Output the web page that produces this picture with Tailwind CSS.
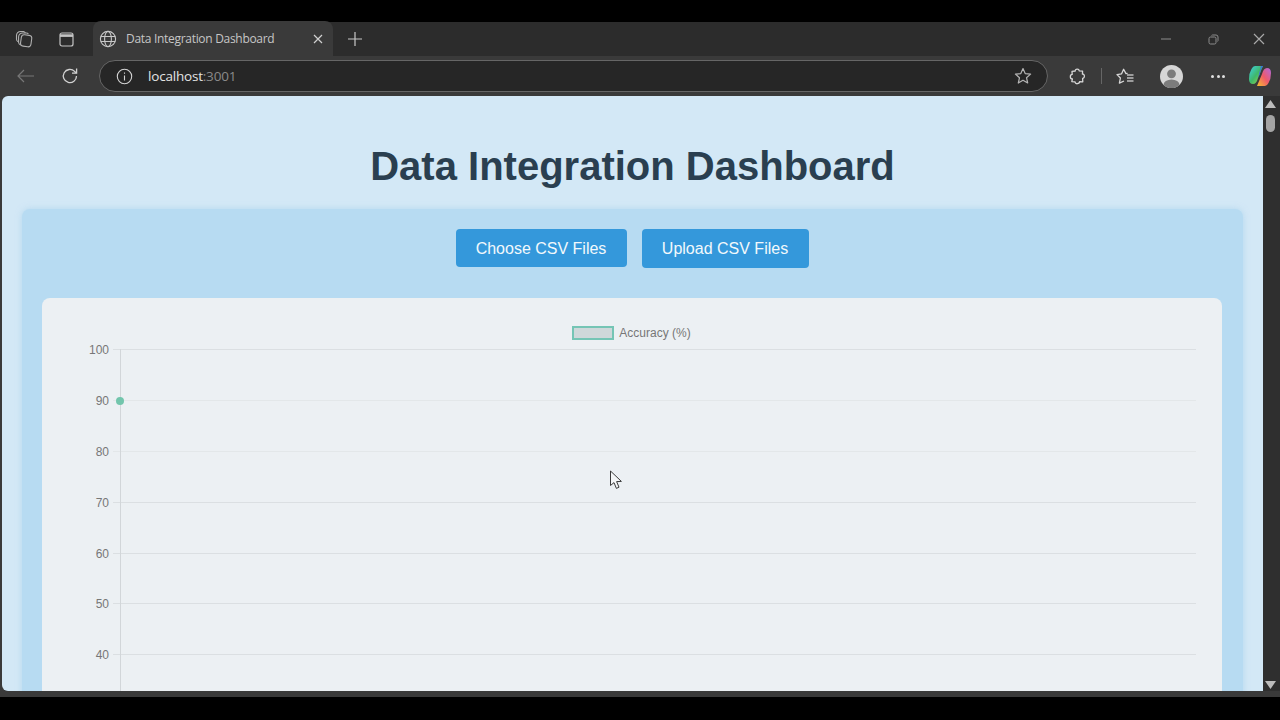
<!DOCTYPE html>
<html>
<head>
<meta charset="utf-8">
<script src="https://cdn.jsdelivr.net/npm/@tailwindcss/browser@4"></script>
<title>Data Integration Dashboard</title>
</head>
<body class="relative w-[1280px] h-[720px] overflow-hidden bg-black font-['Liberation_Sans',Arial,sans-serif]">
<div class="h-[22px] bg-black"></div>
<!-- tab bar -->
<div class="h-[34px] bg-[#2c2c2c] flex items-stretch text-[#c9c9c9]">
  <div class="w-[48px] flex items-center justify-center">
    <svg class="w-[18px] h-[18px]" viewBox="0 0 18 18" fill="none" stroke="#b0b0b0" stroke-width="1.1"><rect x="6" y="5" width="10.5" height="11.5" rx="3" transform="rotate(8 11 10)"/><path d="M5.6 15 A3 3 0 0 1 3.6 12.5 V7 A4 4 0 0 1 7.6 3 H11 A2.6 2.6 0 0 1 13.4 4"/><path d="M3.6 12 A3 3 0 0 1 1.5 9.2 V5.5 A4 4 0 0 1 5.5 1.5 H8.6 A2.6 2.6 0 0 1 10.4 3"/></svg>
  </div>
  <div class="w-[36px] flex items-center justify-center">
    <svg class="w-[15px] h-[15px]" viewBox="0 0 15 15" fill="none" stroke="#c4c4c4" stroke-width="1.2"><rect x="1" y="1" width="13" height="13" rx="2"/><path d="M1 3.6 H14" stroke-width="2.6"/></svg>
  </div>
  <div class="w-[240px] ml-[9px] bg-[#3a3a3a] rounded-t-lg flex items-center pl-[6px] pr-[10px] mt-[-1px] pt-[1px]">
    <svg class="w-[18px] h-[18px] shrink-0" viewBox="0 0 18 18" fill="none" stroke="#c8c8c8" stroke-width="1.1"><circle cx="9" cy="9" r="7.6"/><ellipse cx="9" cy="9" rx="3.4" ry="7.6"/><path d="M1.8 6.5 H16.2 M1.8 11.5 H16.2"/></svg>
    <span class="ml-[9px] text-[12px] text-[#c6c6c6] flex-1 font-['Open_Sans',sans-serif] tracking-[-0.3px] whitespace-nowrap">Data Integration Dashboard</span>
    <svg class="w-[10px] h-[10px]" viewBox="0 0 10 10" stroke="#d0d0d0" stroke-width="1.2"><path d="M1 1 L9 9 M9 1 L1 9"/></svg>
  </div>
  <div class="w-[44px] flex items-center justify-center">
    <svg class="w-[14px] h-[14px]" viewBox="0 0 14 14" stroke="#c8c8c8" stroke-width="1.2"><path d="M7 0 V14 M0 7 H14"/></svg>
  </div>
  <div class="flex-1"></div>
  <div class="w-[119px] shrink-0 flex items-center">
    <svg class="w-[10px] h-[10px] shrink-0" viewBox="0 0 10 10" stroke="#8c8c8c" stroke-width="1"><path d="M0 5 H10"/></svg>
    <svg class="w-[11px] h-[11px] ml-[36.5px] shrink-0" viewBox="0 0 11 11" fill="none" stroke="#8c8c8c" stroke-width="1"><rect x="1" y="3" width="7" height="7" rx="1.5"/><path d="M3.5 1.5 A1 1 0 0 1 4.5 1 H8 A2 2 0 0 1 10 3 V6.5 A1 1 0 0 1 9.5 7.5"/></svg>
    <svg class="w-[12px] h-[12px] ml-[34.5px] shrink-0" viewBox="0 0 12 12" stroke="#a8a8a8" stroke-width="1.2"><path d="M1 1 L11 11 M11 1 L1 11"/></svg>
  </div>
</div>
<!-- toolbar -->
<div class="h-[40px] bg-[#3a3a3a] flex items-center relative">
  <div class="w-[52px] flex justify-center">
    <svg class="w-[18px] h-[14px]" viewBox="0 0 18 14" fill="none" stroke="#777" stroke-width="1.2"><path d="M17 7 H1 M7 1 L1 7 L7 13"/></svg>
  </div>
  <div class="w-[36px] flex justify-center">
    <svg class="w-[18px] h-[18px]" viewBox="0 0 18 18" fill="none" stroke="#d2d2d2" stroke-width="1.3"><path d="M15.5 9 A6.6 6.6 0 1 1 13.6 4.4 L15.5 6"/><path d="M15.6 1.6 V6.2 H11"/></svg>
  </div>
  <div class="ml-[11px] w-[949px] h-[32px] rounded-full bg-[#262626] border border-[#666] flex items-center pl-[16px] pr-[15px]">
    <svg class="w-[17px] h-[17px]" viewBox="0 0 17 17" fill="none" stroke="#d4d4d4" stroke-width="1.1"><circle cx="8.5" cy="8.5" r="7.2"/><path d="M8.5 7.5 V12.5 M8.5 4.4 V5.8"/></svg>
    <span class="ml-[15px] text-[13.5px] font-['Open_Sans',sans-serif] tracking-[-0.2px] text-[#e4e4e4] flex-1">localhost<span class="text-[#8a8a8a]">:3001</span></span>
    <svg class="w-[18px] h-[18px]" viewBox="0 0 18 18" fill="none" stroke="#b4b4b4" stroke-width="1.2" stroke-linejoin="round"><path d="M9 1.6 L11.2 6.6 L16.6 7.1 L12.5 10.7 L13.7 16 L9 13.2 L4.3 16 L5.5 10.7 L1.4 7.1 L6.8 6.6 Z"/></svg>
  </div>
  <div class="ml-[19px] w-[20px] flex justify-center">
    <svg class="w-[17px] h-[17px]" viewBox="0 0 17 17" fill="none" stroke="#d6d6d6" stroke-width="1.3" stroke-linejoin="round"><path d="M6.2 3 C6 0.6 10 0.4 10.2 2.8 L13.6 3.2 L13.4 6 C16 5.8 16 10.4 13.6 10.4 L13.8 13.8 L10.6 13.6 C10.6 16.4 6 16.4 6 13.8 L2.8 13.6 L3.4 11 C0.6 10.8 0.8 6.4 3.2 6.4 L3 3.4 Z"/></svg>
  </div>
  <div class="ml-[14px] w-px h-[16px] bg-[#666]"></div>
  <div class="ml-[13px] w-[20px] flex justify-center">
    <svg class="w-[18px] h-[17px]" viewBox="0 0 18 17" fill="none" stroke="#d6d6d6" stroke-width="1.3" stroke-linejoin="round"><path d="M11.6 5.4 L10 5.6 L7.6 1.2 L5.6 5.8 L1 6.6 L4.4 10 L3.4 15.2 L8 13"/><path d="M11 7 H17.5 M11 10 H17.5 M11 13 H17.5" stroke="#bdbdbd"/></svg>
  </div>
  <div class="ml-[25px] w-[23px] h-[23px] rounded-full bg-[#d6d6d6] overflow-hidden flex justify-center">
    <svg class="w-[23px] h-[23px]" viewBox="0 0 23 23"><circle cx="11.5" cy="8.8" r="4.4" fill="#7c7c7c"/><ellipse cx="11.5" cy="20" rx="8" ry="5.5" fill="#7c7c7c"/></svg>
  </div>
  <div class="ml-[28px] w-[14px] flex justify-between">
    <span class="w-[3px] h-[3px] rounded-full bg-[#e0e0e0]"></span><span class="w-[3px] h-[3px] rounded-full bg-[#e0e0e0]"></span><span class="w-[3px] h-[3px] rounded-full bg-[#e0e0e0]"></span>
  </div>
  <div class="ml-[23px]">
    <svg class="w-[24px] h-[22px]" viewBox="0 0 24 22">
      <defs>
        <linearGradient id="cpa" x1="0" y1="0" x2="1" y2="1"><stop offset="0" stop-color="#3fd0e8"/><stop offset="0.5" stop-color="#3fb86a"/><stop offset="1" stop-color="#a8d848"/></linearGradient>
        <linearGradient id="cpb" x1="0" y1="1" x2="1" y2="0"><stop offset="0" stop-color="#f6c12d"/><stop offset="0.5" stop-color="#ef5a6a"/><stop offset="1" stop-color="#b06ae0"/></linearGradient>
      </defs>
      <path d="M7 1 H15 L10 13 Q8.5 19 5 19 Q1 19 1 14 Q1 8 3.5 4 Q5 1 7 1 Z" fill="url(#cpa)"/>
      <path d="M17 21 H9 L14 9 Q15.5 3 19 3 Q23 3 23 8 Q23 14 20.5 18 Q19 21 17 21 Z" fill="url(#cpb)"/>
      <path d="M13 1 H15 Q12.5 4 12 9 L10 13 Z" fill="#3b6fe0"/>
    </svg>
  </div>
</div>
<!-- viewport -->
<div class="h-[595px] bg-[#3a3a3a] flex pl-[2px]">
  <div class="w-[1261px] h-[595px] rounded-tl-md rounded-bl-md overflow-hidden bg-[#d3e8f6] px-[20px]">
    <h1 class="h-[113px] pt-[45px] text-center text-[#2a3f50] text-[40px] leading-[50px] font-bold">Data Integration Dashboard</h1>
    <div class="h-[600px] bg-[#b7dbf2] rounded-t-lg px-[20px] pt-[20px] shadow-[0_0_6px_rgba(160,205,235,0.6)]">
      <div class="flex justify-center gap-[15px] h-[39px] pr-[1px]">
        <div class="w-[171px] h-[38px] pt-[1px] rounded bg-[#3498db] text-[#f2f8fc] text-[16px] flex items-center justify-center">Choose CSV Files</div>
        <div class="w-[167px] h-[39px] rounded bg-[#3498db] text-[#f2f8fc] text-[16px] flex items-center justify-center">Upload CSV Files</div>
      </div>
      <div class="mt-[30px] mr-[1px] h-[500px] bg-[#ecf0f3] rounded-t-lg">
        <div class="h-[28px] pt-[21px] pr-[1px] flex items-center justify-center gap-[5px] box-content">
          <div class="w-[42px] h-[14px] bg-[#cfd8da] border-2 border-[#75c5b5]"></div>
          <span class="text-[12px] text-[#777]">Accuracy (%)</span>
        </div>
        <div class="relative mt-[2px]">
          <div class="absolute left-[78px] top-0 h-[400px] w-px bg-[#d2d6d9]"></div>
          <div class="absolute left-[74px] top-[47.5px] w-[8px] h-[8px] rounded-full bg-[#72c5ac]"></div>
          <div class="h-[50.9px] flex items-start"><span class="w-[67px] text-right text-[12px] leading-[14px] -mt-[6px] text-[#777]">100</span><div class="ml-[4px] flex-1 h-px bg-[#dbdfe2] mr-[26px]"></div></div>
          <div class="h-[50.9px] flex items-start"><span class="w-[67px] text-right text-[12px] leading-[14px] -mt-[6px] text-[#777]">90</span><div class="ml-[4px] flex-1 h-px bg-[#e3e7e9] mr-[26px]"></div></div>
          <div class="h-[50.9px] flex items-start"><span class="w-[67px] text-right text-[12px] leading-[14px] -mt-[6px] text-[#777]">80</span><div class="ml-[4px] flex-1 h-px bg-[#e3e7e9] mr-[26px]"></div></div>
          <div class="h-[50.9px] flex items-start"><span class="w-[67px] text-right text-[12px] leading-[14px] -mt-[6px] text-[#777]">70</span><div class="ml-[4px] flex-1 h-px bg-[#dbdfe2] mr-[26px]"></div></div>
          <div class="h-[50.9px] flex items-start"><span class="w-[67px] text-right text-[12px] leading-[14px] -mt-[6px] text-[#777]">60</span><div class="ml-[4px] flex-1 h-px bg-[#dbdfe2] mr-[26px]"></div></div>
          <div class="h-[50.9px] flex items-start"><span class="w-[67px] text-right text-[12px] leading-[14px] -mt-[6px] text-[#777]">50</span><div class="ml-[4px] flex-1 h-px bg-[#dbdfe2] mr-[26px]"></div></div>
          <div class="h-[50.9px] flex items-start"><span class="w-[67px] text-right text-[12px] leading-[14px] -mt-[6px] text-[#777]">40</span><div class="ml-[4px] flex-1 h-px bg-[#dbdfe2] mr-[26px]"></div></div>
        </div>
      </div>
    </div>
  </div>
  <!-- scrollbar -->
  <div class="w-[17px] h-[595px] bg-[#2f2f2f] flex flex-col items-center pt-[4px] pr-[3px]">
    <svg class="w-[11px] h-[8px]" viewBox="0 0 11 8"><path d="M5.5 0 L11 8 H0 Z" fill="#bdbdbd"/></svg>
    <div class="mt-[7px] w-[9px] h-[17px] rounded-full bg-[#a4a4a4]"></div>
    <div class="flex-1"></div>
    <svg class="w-[11px] h-[8px] mb-[2px]" viewBox="0 0 11 8"><path d="M5.5 8 L11 0 H0 Z" fill="#bdbdbd"/></svg>
  </div>
</div>
<div class="h-[6px] bg-[#3a3a3a]"></div>
<!-- mouse pointer, lying over the page -->
<svg class="absolute left-[609px] top-[470px] w-[14px] h-[20px]" viewBox="0 0 14 20" fill="#f4f6f7" stroke="#3a3a3a" stroke-width="1" stroke-linejoin="round"><path d="M1.5 1 V15.5 L5 12.6 L7.4 18.4 L10 17.2 L7.6 11.6 L12.4 11.4 Z"/></svg>
</body>
</html>
